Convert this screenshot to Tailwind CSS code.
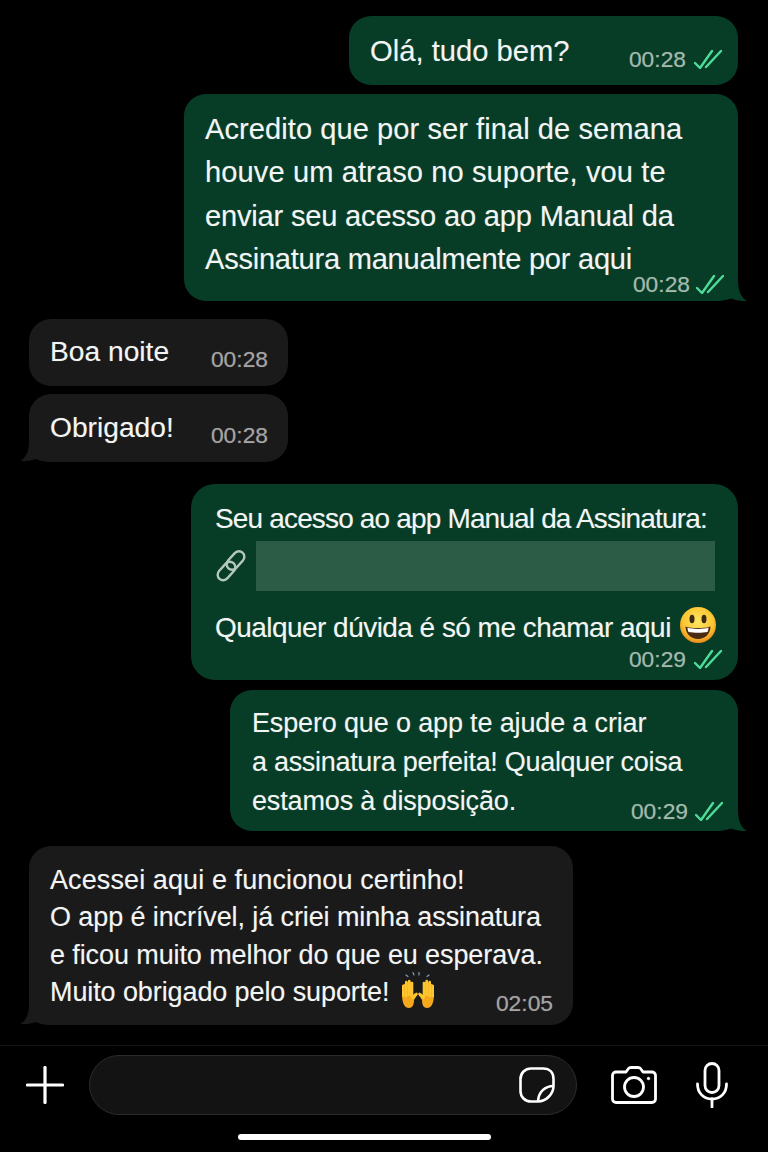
<!DOCTYPE html>
<html lang="pt-BR">
<head>
  <meta charset="UTF-8" />
  <meta name="viewport" content="width=device-width, initial-scale=1.0"/>
  <title>Conversa</title>
  <script src="https://cdn.jsdelivr.net/npm/@tailwindcss/browser@4"></script>
</head>
<body class="bg-black">
  <div class="w-[768px] h-[1152px] overflow-hidden bg-black flex flex-col font-['Liberation_Sans',Arial,sans-serif] text-[#f2f5f3] [text-shadow:0_0_1px_rgb(255_255_255/0.3)]">

    <!-- Mensagens -->
    <div class="h-[1045px] pt-[16px] flex flex-col">

      <div class="relative self-end mr-[30px] w-[389px] h-[69px] rounded-[22px] bg-[#073d27] pl-[21px] pt-[15px] text-[29.2px] leading-[40px]">
        Olá, tudo bem?
        <div class="absolute right-[16px] bottom-[13px] flex items-center gap-[8px] text-[22.8px] leading-[26px] text-[#a3baad]">
          <span>00:28</span>
          <svg class="w-[28px] h-[20px]" viewBox="0 0 28 20" fill="none" stroke="#4fdc9a" stroke-width="2.400" stroke-linecap="round" stroke-linejoin="round"><path d="M1 14l5 5L18 2"/><path d="M12 18L27 2"/></svg>
        </div>
      </div>

      <div class="relative self-end mr-[30px] mt-[9px] w-[554px] h-[207px] rounded-[22px] bg-[#073d27] pl-[21px] pt-[14px] text-[29.1px] leading-[43.300px] whitespace-nowrap">
        <span class="tracking-[0.05px]">Acredito que por ser final de semana</span><br><span class="tracking-[0.09px]">houve um atraso no suporte, vou te</span><br><span class="tracking-[-0.2px]">enviar seu acesso ao app Manual da</span><br><span class="tracking-[-0.26px]">Assinatura manualmente por aqui</span>
        <svg class="absolute right-[-9px] bottom-0 w-[30px] h-[20px]" viewBox="0 0 30 20" fill="#073d27"><path d="M0 0H21C21 9 24 17 30 20C24 20.500 18 19 14 17.500C10 19 5 20 0 20Z"/></svg>
        <div class="absolute right-[14px] bottom-[4px] flex items-center gap-[6px] text-[22.8px] leading-[26px] text-[#a3baad]">
          <span>00:28</span>
          <svg class="w-[28px] h-[20px]" viewBox="0 0 28 20" fill="none" stroke="#4fdc9a" stroke-width="2.400" stroke-linecap="round" stroke-linejoin="round"><path d="M1 14l5 5L18 2"/><path d="M12 18L27 2"/></svg>
        </div>
      </div>

      <div class="relative self-start ml-[29px] mt-[18px] w-[259px] h-[67px] rounded-[22px] bg-[#1a1a1b] pl-[21px] pt-[12px] text-[28.2px] leading-[40px]">
        Boa noite
        <span class="absolute right-[20px] bottom-[14px] text-[22.8px] leading-[26px] text-[#a4a4a4]">00:28</span>
      </div>

      <div class="relative self-start ml-[29px] mt-[8px] w-[259px] h-[68px] rounded-[22px] bg-[#1a1a1b] pl-[21px] pt-[13px] text-[28.2px] leading-[40px]">
        Obrigado!
        <svg class="absolute left-[-9px] bottom-0 w-[30px] h-[20px]" viewBox="0 0 30 20" fill="#1a1a1b"><path d="M30 0H9C9 9 6 16 0 19C6 19.500 12 18.500 16 17C20 19 25 20 30 20Z"/></svg>
        <span class="absolute right-[20px] bottom-[14px] text-[22.8px] leading-[26px] text-[#a4a4a4]">00:28</span>
      </div>

      <div class="relative self-end mr-[30px] mt-[22px] w-[547px] h-[196px] rounded-[24px] bg-[#073d27] pl-[24px] pt-[16px] text-[28px] leading-[38px] whitespace-nowrap">
        <div class="tracking-[-0.84px]">Seu acesso ao app Manual da Assinatura:</div>
        <div class="flex items-center mt-[3px] h-[50px]">
          <svg class="w-[32px] h-[32px] text-[#b4c8bd]" viewBox="0 0 32 32" fill="none" stroke="currentColor" stroke-width="2.400"><rect x="-10.500" y="-5.500" width="21" height="11" rx="5.500" transform="translate(11.500 21) rotate(-48)"/><rect x="-10.500" y="-5.500" width="21" height="11" rx="5.500" transform="translate(20.500 10.500) rotate(-48)"/></svg>
          <div class="ml-[9px] w-[459px] h-[50px] bg-[#2d5c46]"></div>
        </div>
        <div class="flex items-center mt-[18px] h-[38px] tracking-[-0.54px]">
          <span>Qualquer dúvida é só me chamar aqui</span>
          <svg class="ml-[9px] w-[36px] h-[36px] mt-[-6px]" viewBox="0 0 36 36">
            <defs><radialGradient id="rosto" cx="50%" cy="40%" r="60%"><stop offset="0" stop-color="#ffe566"/><stop offset="0.7" stop-color="#fbc630"/><stop offset="1" stop-color="#e98a1a"/></radialGradient></defs>
            <circle cx="18" cy="18" r="18" fill="url(#rosto)"/>
            <ellipse cx="12" cy="12" rx="2.500" ry="4.200" fill="#3d2a14"/>
            <ellipse cx="24" cy="12" rx="2.500" ry="4.200" fill="#3d2a14"/>
            <path d="M5.500 19.500C10 21.500 26 21.500 30.500 19.500C30.500 27 25 32 18 32C11 32 5.500 27 5.500 19.500Z" fill="#4a2a12"/>
            <path d="M7.500 20.800C12 22.300 24 22.300 28.500 20.800C28.500 22.500 28 24 27.500 25C22 26 14 26 8.500 25C8 24 7.500 22.500 7.500 20.800Z" fill="#fff"/>
          </svg>
        </div>
        <div class="absolute right-[16px] bottom-[8px] flex items-center gap-[8px] text-[22.8px] leading-[26px] text-[#a3baad]">
          <span>00:29</span>
          <svg class="w-[28px] h-[20px]" viewBox="0 0 28 20" fill="none" stroke="#4fdc9a" stroke-width="2.400" stroke-linecap="round" stroke-linejoin="round"><path d="M1 14l5 5L18 2"/><path d="M12 18L27 2"/></svg>
        </div>
      </div>

      <div class="relative self-end mr-[30px] mt-[10px] w-[508px] h-[141px] rounded-[22px] bg-[#073d27] pl-[22px] pt-[14px] text-[27px] leading-[39px] tracking-[-0.15px] whitespace-nowrap">
        Espero que o app te ajude a criar<br><span class="tracking-[-0.3px]">a assinatura perfeita! Qualquer coisa</span><br>estamos à disposição.
        <svg class="absolute right-[-9px] bottom-0 w-[30px] h-[20px]" viewBox="0 0 30 20" fill="#073d27"><path d="M0 0H21C21 9 24 17 30 20C24 20.500 18 19 14 17.500C10 19 5 20 0 20Z"/></svg>
        <div class="absolute right-[15px] bottom-[7px] flex items-center gap-[7px] text-[22.8px] leading-[26px] tracking-normal text-[#a3baad]">
          <span>00:29</span>
          <svg class="w-[28px] h-[20px]" viewBox="0 0 28 20" fill="none" stroke="#4fdc9a" stroke-width="2.400" stroke-linecap="round" stroke-linejoin="round"><path d="M1 14l5 5L18 2"/><path d="M12 18L27 2"/></svg>
        </div>
      </div>

      <div class="relative self-start ml-[29px] mt-[15px] w-[544px] h-[179px] rounded-[22px] bg-[#1a1a1b] pl-[21px] pt-[16px] text-[27px] leading-[37.300px] tracking-[-0.1px] whitespace-nowrap">
        <span class="tracking-[0.1px]">Acessei aqui e funcionou certinho!</span><br>O app é incrível, já criei minha assinatura<br>e ficou muito melhor do que eu esperava.<br>
        <span class="inline-flex items-center">Muito obrigado pelo suporte!
          <svg class="ml-[10px] w-[38px] h-[37px] mt-[-6px]" viewBox="0 0 38 37" fill="none" stroke-linecap="round" stroke-linejoin="round">
            <g stroke="#7f9fb8" stroke-width="1.200"><path d="M7 4l2 1.500"/><path d="M14 1.500l1 2.500"/><path d="M20 1.500v2.500"/><path d="M30 4l-2 1.500"/></g>
            <g id="mao-esq">
              <path d="M3 23C3 31 5 37 10 37C14 37 15 33 15 29L18.500 23.500L15.500 22.500L13 25L14 13L10.500 10L7 12L3.500 14Z" fill="#f5a81c"/>
              <g stroke="#fcc62e" stroke-width="2.600"><path d="M4.300 15v10"/><path d="M7.300 11v14"/><path d="M10.300 10v14"/><path d="M13 12v13"/><path d="M13.500 27l4-4"/></g>
            </g>
            <g>
              <path d="M35 23C35 31 33 37 28 37C24 37 23 33 23 29L19.500 23.500L22.500 22.500L25 25L24 13L27.500 10L31 12L34.500 14Z" fill="#f5a81c"/>
              <g stroke="#fcc62e" stroke-width="2.600"><path d="M33.700 15v10"/><path d="M30.700 11v14"/><path d="M27.700 10v14"/><path d="M25 12v13"/><path d="M24.500 27l-4-4"/></g>
            </g>
          </svg>
        </span>
        <svg class="absolute left-[-9px] bottom-0 w-[30px] h-[20px]" viewBox="0 0 30 20" fill="#1a1a1b"><path d="M30 0H9C9 9 6 16 0 19C6 19.500 12 18.500 16 17C20 19 25 20 30 20Z"/></svg>
        <span class="absolute right-[20px] bottom-[9px] text-[22.8px] leading-[26px] tracking-normal text-[#a4a4a4]">02:05</span>
      </div>
    </div>

    <!-- Barra de entrada -->
    <div class="h-[107px] border-t border-[#161616] relative">
      <div class="flex items-center h-[69px] pt-[9px]">
        <svg class="ml-[26px] w-[38px] h-[38px]" viewBox="0 0 38 38" stroke="#fff" stroke-width="3.200" stroke-linecap="round"><path d="M19 1.500v35"/><path d="M1.500 19h35"/></svg>
        <div class="ml-[25px] w-[488px] h-[60px] rounded-full bg-[#131313] border border-[#2c2c2c] flex items-center justify-end pr-[21px]">
          <svg class="w-[36px] h-[36px]" viewBox="0 0 36 36" fill="none" stroke="#fff" stroke-width="2.600" stroke-linejoin="round"><path d="M12 1.500H24C31 1.500 34.500 6 34.500 12V19C34.500 27 27 34.500 19 34.500H12C6 34.500 1.500 30 1.500 24V12C1.500 6 6 1.500 12 1.500Z"/><path d="M34.500 19C26 19 19.500 25 19 34.500"/></svg>
        </div>
        <svg class="ml-[34px] w-[46px] h-[38px]" viewBox="0 0 46 38" fill="none" stroke="#fff" stroke-width="2.800" stroke-linejoin="round"><path d="M15 6L17.500 2.500C18 1.800 19 1.500 20 1.500H27C28 1.500 29 1.800 29.500 2.500L32 6H41C43 6 44.500 7.500 44.500 9.500V33C44.500 35 43 36.500 41 36.500H5C3 36.500 1.500 35 1.500 33V9.500C1.500 7.500 3 6 5 6Z"/><circle cx="23" cy="21" r="9.500"/><circle cx="37.500" cy="12.500" r="1.200" fill="#fff" stroke-width="1"/></svg>
        <svg class="ml-[39px] w-[32px] h-[46px]" viewBox="0 0 32 46" fill="none" stroke="#fff" stroke-width="2.800" stroke-linecap="round"><rect x="9" y="1.500" width="14" height="29" rx="7"/><path d="M1.500 22C1.500 31 7.500 37 16 37C24.500 37 30.500 31 30.500 22"/><path d="M16 37v8"/></svg>
      </div>
      <div class="absolute left-[238px] top-[88px] w-[253px] h-[6px] rounded-full bg-white"></div>
    </div>
  </div>
</body>
</html>
